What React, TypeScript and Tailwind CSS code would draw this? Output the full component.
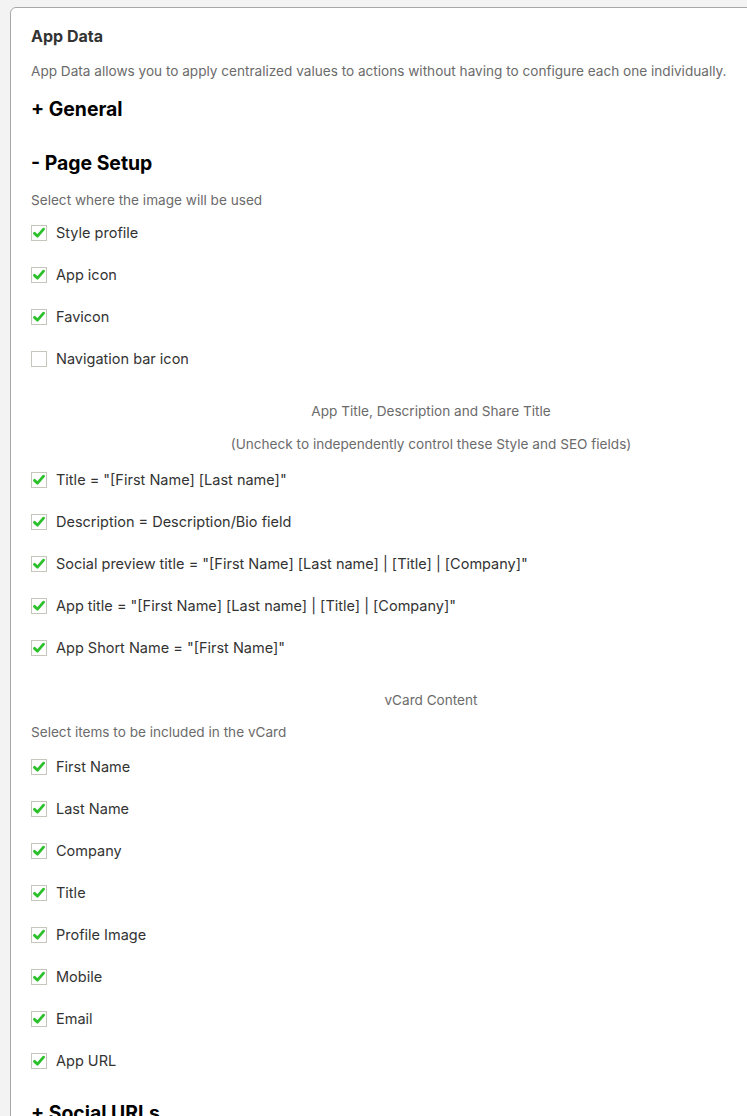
import React from 'react'

type Item = { label: string; checked: boolean }

const imageUses: Item[] = [
  { label: 'Style profile', checked: true },
  { label: 'App icon', checked: true },
  { label: 'Favicon', checked: true },
  { label: 'Navigation bar icon', checked: false },
]

const titleFields: Item[] = [
  { label: 'Title = "[First Name] [Last name]"', checked: true },
  { label: 'Description = Description/Bio field', checked: true },
  { label: 'Social preview title = "[First Name] [Last name] | [Title] | [Company]"', checked: true },
  { label: 'App title = "[First Name] [Last name] | [Title] | [Company]"', checked: true },
  { label: 'App Short Name = "[First Name]"', checked: true },
]

const vcardFields: Item[] = [
  'First Name',
  'Last Name',
  'Company',
  'Title',
  'Profile Image',
  'Mobile',
  'Email',
  'App URL',
].map(label => ({ label, checked: true }))

function Checkbox({ checked }: { checked: boolean }) {
  return (
    <span className="flex h-4 w-4 shrink-0 items-center justify-center border border-[#c6c6bd] bg-white">
      {checked && (
        <svg viewBox="0 0 16 16" className="h-[14px] w-[14px]">
          <path d="M2.8 8.4 L6.3 11.6 L13.2 3.6" fill="none" stroke="#2cc12c" strokeWidth="3.2" strokeLinecap="round" strokeLinejoin="round" />
        </svg>
      )}
    </span>
  )
}

function CheckList({ items }: { items: Item[] }) {
  return (
    <div className="flex flex-col gap-[18px]">
      {items.map(item => (
        <label key={item.label} className="flex h-6 items-center gap-[9px] text-[14.5px] text-[#333]">
          <Checkbox checked={item.checked} />
          <span>{item.label}</span>
        </label>
      ))}
    </div>
  )
}

export default function App() {
  return (
    <div className="h-[1116px] w-[747px] overflow-hidden bg-[#f3f3f3] pl-[10px] pt-[7px]" style={{ fontFamily: 'Inter, "Noto Sans", sans-serif' }}>
      <div className="w-[842px] min-h-[1200px] rounded-md border border-[#a8a8a8] bg-white px-5 pt-4">
        <h2 className="text-base font-bold leading-6 text-[#333]">App Data</h2>
        <p className="mt-[13px] text-[13.6px] leading-5 text-[#6b6b6b]">
          App Data allows you to apply centralized values to actions without having to configure each one individually.
        </p>

        <h3 className="mt-[14px] text-[19.4px] font-bold leading-7 text-black">+ General</h3>

        <h3 className="mt-[26px] text-[19.4px] font-bold leading-7 text-black">- Page Setup</h3>
        <p className="mt-[13px] text-[13.6px] leading-5 text-[#6b6b6b]">Select where the image will be used</p>
        <div className="mt-[11px]">
          <CheckList items={imageUses} />
        </div>

        <p className="mt-[30px] text-center text-[13.6px] leading-5 text-[#6b6b6b]">App Title, Description and Share Title</p>
        <p className="mt-[13px] text-center text-[13.6px] leading-5 text-[#6b6b6b]">
          (Uncheck to independently control these Style and SEO fields)
        </p>
        <div className="mt-[14px]">
          <CheckList items={titleFields} />
        </div>

        <p className="mt-[30px] text-center text-[13.6px] leading-5 text-[#6b6b6b]">vCard Content</p>
        <p className="mt-3 text-[13.6px] leading-5 text-[#6b6b6b]">Select items to be included in the vCard</p>
        <div className="mt-[13px]">
          <CheckList items={vcardFields} />
        </div>

        <h3 className="mt-[26px] text-[19.4px] font-bold leading-7 text-black">+ Social URLs</h3>
      </div>
    </div>
  )
}
